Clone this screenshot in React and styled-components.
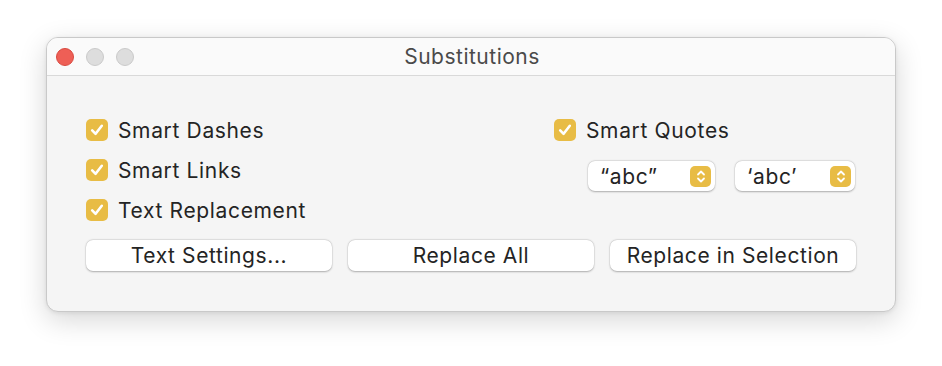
import styled, { createGlobalStyle } from 'styled-components'

const GlobalStyle = createGlobalStyle`
  html, body {
    margin: 0;
    padding: 0;
    background: #ffffff;
  }
  body {
    font-family: Inter, "Liberation Sans", sans-serif;
    -webkit-font-smoothing: antialiased;
  }
`

const accent = '#e8bc45'

const Page = styled.div`
  width: 942px;
  height: 366px;
  padding: 37px 0 0 46px;
  box-sizing: border-box;
`

const Window = styled.div`
  width: 850px;
  height: 275px;
  box-sizing: border-box;
  border-radius: 12px;
  background: #f5f5f5;
  border: 1px solid #c9c9c9;
  box-shadow: 0 8px 28px rgba(0, 0, 0, 0.16), 0 1px 4px rgba(0, 0, 0, 0.08);
  overflow: hidden;
  display: flex;
  flex-direction: column;
`

const TitleBar = styled.div`
  height: 37px;
  flex-shrink: 0;
  background: #fafafa;
  border-bottom: 1px solid #d9d9d9;
  display: grid;
  grid-template-columns: 1fr auto 1fr;
  align-items: center;
  padding: 0 9px;
`

const Lights = styled.div`
  display: flex;
  gap: 12px;
`

const Light = styled.span`
  width: 18px;
  height: 18px;
  border-radius: 50%;
  box-sizing: border-box;
  background: ${p => (p.$red ? '#ee5f56' : '#dddddd')};
  border: 1px solid ${p => (p.$red ? '#d8493f' : '#c9c9c9')};
`

const Title = styled.div`
  font-size: 21px;
  color: #4a4a4a;
  letter-spacing: 0.5px;
  margin-left: 2px;
`

const Content = styled.div`
  padding: 43px 39px 0 39px;
  display: flex;
  flex-direction: column;
  gap: 19px;
`

const Top = styled.div`
  display: flex;
  justify-content: space-between;
`

const Column = styled.div`
  display: flex;
  flex-direction: column;
  gap: 18px;
`

const RightColumn = styled(Column)`
  width: 302px;
  gap: 20px;
`

const CheckRow = styled.label`
  display: flex;
  align-items: center;
  gap: 10px;
  height: 22px;
  font-size: 21px;
  color: #242424;
  letter-spacing: 0.65px;
`

const Box = styled.span`
  width: 22px;
  height: 22px;
  border-radius: 5px;
  background: ${accent};
  display: flex;
  align-items: center;
  justify-content: center;
  flex-shrink: 0;
`

const Popups = styled.div`
  display: flex;
  justify-content: flex-end;
  gap: 20px;
  padding-right: 1px;
`

const Popup = styled.div`
  width: ${p => p.$width}px;
  height: 30px;
  box-sizing: border-box;
  background: #ffffff;
  border-radius: 7px;
  box-shadow: 0 0.5px 2px rgba(0, 0, 0, 0.28), 0 0 0 0.5px rgba(0, 0, 0, 0.06);
  display: flex;
  align-items: center;
  justify-content: space-between;
  padding: 0 4px 0 12px;
  font-size: 21px;
  color: #242424;
  letter-spacing: 0.6px;
`

const Stepper = styled.span`
  width: 21px;
  height: 21px;
  border-radius: 5px;
  background: ${accent};
  display: flex;
  align-items: center;
  justify-content: center;
`

const Buttons = styled.div`
  display: grid;
  grid-template-columns: repeat(3, 1fr);
  gap: 16px;
`

const Button = styled.button`
  height: 31px;
  border: none;
  border-radius: 7px;
  background: #ffffff;
  box-shadow: 0 0.5px 2px rgba(0, 0, 0, 0.28), 0 0 0 0.5px rgba(0, 0, 0, 0.06);
  font-family: Inter, "Liberation Sans", sans-serif;
  font-size: 21px;
  color: #242424;
  letter-spacing: 0.6px;
  padding: 0;
`

function Check() {
  return (
    <Box>
      <svg width="16" height="16" viewBox="0 0 16 16" fill="none">
        <path d="M3.2 8.4 L6.6 11.8 L12.8 3.8" stroke="#fff" strokeWidth="2.6" strokeLinecap="round" strokeLinejoin="round" />
      </svg>
    </Box>
  )
}

function Chevrons() {
  return (
    <Stepper>
      <svg width="12" height="15" viewBox="0 0 12 15" fill="none">
        <path d="M3 5.5 L6 2.5 L9 5.5 M3 9.5 L6 12.5 L9 9.5" stroke="#fff" strokeWidth="1.8" strokeLinecap="round" strokeLinejoin="round" />
      </svg>
    </Stepper>
  )
}

function CheckItem({ label }) {
  return (
    <CheckRow>
      <Check />
      {label}
    </CheckRow>
  )
}

export default function App() {
  return (
    <>
      <GlobalStyle />
      <Page>
        <Window>
          <TitleBar>
            <Lights>
              <Light $red />
              <Light />
              <Light />
            </Lights>
            <Title>Substitutions</Title>
            <div />
          </TitleBar>
          <Content>
            <Top>
              <Column>
                <CheckItem label="Smart Dashes" />
                <CheckItem label="Smart Links" />
                <CheckItem label="Text Replacement" />
              </Column>
              <RightColumn>
                <CheckItem label="Smart Quotes" />
                <Popups>
                  <Popup $width={127}>
                    <span>“abc”</span>
                    <Chevrons />
                  </Popup>
                  <Popup $width={120}>
                    <span>‘abc’</span>
                    <Chevrons />
                  </Popup>
                </Popups>
              </RightColumn>
            </Top>
            <Buttons>
              <Button>Text Settings...</Button>
              <Button>Replace All</Button>
              <Button>Replace in Selection</Button>
            </Buttons>
          </Content>
        </Window>
      </Page>
    </>
  )
}
